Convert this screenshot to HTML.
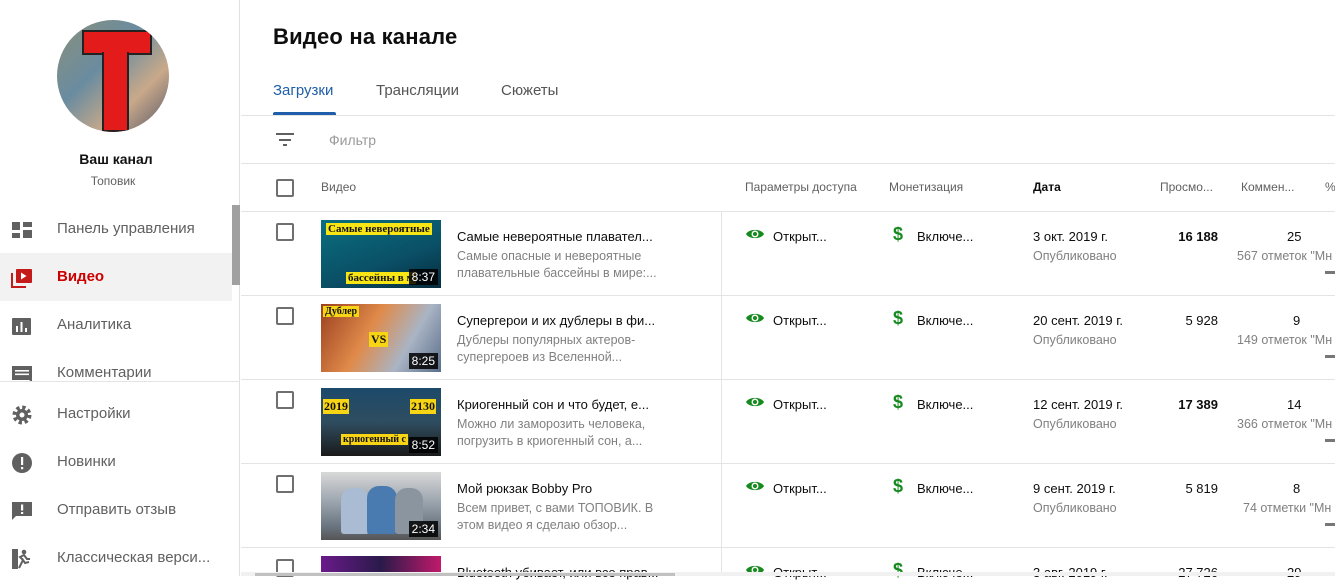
<!DOCTYPE html>
<html><head><meta charset="utf-8"><style>
*{margin:0;padding:0;box-sizing:border-box}
body{width:1335px;height:576px;overflow:hidden;background:#fff;font-family:"Liberation Sans",Arial,sans-serif;position:relative;color:#0d0d0d}
.a{position:absolute;white-space:nowrap}
.side{position:absolute;left:0;top:0;width:240px;height:576px;border-right:1px solid #e0e0e0}
.nav{position:absolute;left:0;width:232px;height:48px;font-size:15px;color:#606060}
.nav span{position:absolute;left:57px;top:15px}
.nav svg{position:absolute;left:11px;top:14px}
.hl{position:absolute;height:1px;background:#e4e4e4}
.cb{position:absolute;left:276px;width:18px;height:18px;border:2px solid #6f6f6f;border-radius:2px}
.th{font-size:12px;color:#606060}
.t1{font-size:13px;color:#0d0d0d}
.t2{font-size:12.5px;color:#808080;line-height:17px}
.dur{position:absolute;right:3px;bottom:3px;background:rgba(0,0,0,.85);color:#fff;font-size:12px;padding:1px 3px}
</style></head><body>
<div class="side">
 <div class="a" style="left:57px;top:20px;width:112px;height:112px;border-radius:50%;overflow:hidden;background:linear-gradient(135deg,#8a8f7a,#6a8ca0 40%,#c9a98a 70%,#556)">
  <div style="position:absolute;left:25px;top:10px;width:70px;height:25px;background:#e31b1b;border:2px solid #222"></div>
  <div style="position:absolute;left:45px;top:32px;width:27px;height:80px;background:#e31b1b;border:2px solid #222;border-top:none"></div>
 </div>
 <div class="a" style="left:0;width:232px;text-align:center;top:151px;font-size:14px;font-weight:bold;color:#111">Ваш канал</div>
 <div class="a" style="left:0;width:226px;text-align:center;top:174px;font-size:12px;color:#606060">Топовик</div>
 <div class="nav" style="top:205px"><svg width="22" height="22"><rect x="1" y="3" width="8" height="8" fill="#606060"/><rect x="12" y="3" width="9" height="5" fill="#606060"/><rect x="1" y="14" width="8" height="5" fill="#606060"/><rect x="12" y="11" width="9" height="8" fill="#606060"/></svg><span>Панель управления</span></div>
 <div class="nav" style="top:253px;background:#f2f2f2;color:#c00;font-weight:bold"><svg width="22" height="22"><path d="M1 6v14h14" stroke="#c41a1a" stroke-width="2" fill="none"/><rect x="5" y="2" width="16" height="14" rx="1" fill="#c41a1a"/><path d="M10 5.5v7l5.5-3.5z" fill="#fff"/></svg><span>Видео</span></div>
 <div class="nav" style="top:301px"><svg width="22" height="22"><rect x="1" y="3" width="19" height="17" rx="1" fill="#606060"/><rect x="5" y="11" width="2" height="6" fill="#fff"/><rect x="9.5" y="7" width="2" height="10" fill="#fff"/><rect x="14" y="13" width="2" height="4" fill="#fff"/></svg><span>Аналитика</span></div>
 <div class="nav" style="top:349px"><svg width="22" height="22"><path d="M1 3h20v16l-3-2H1z" fill="#606060"/><rect x="4" y="7" width="14" height="1.6" fill="#fff"/><rect x="4" y="10.5" width="14" height="1.6" fill="#fff"/></svg><span>Комментарии</span></div>
 <div class="hl" style="left:0;top:381px;width:240px"></div>
 <div class="nav" style="top:390px"><svg width="22" height="22"><circle cx="11" cy="11" r="7" fill="none" stroke="#606060" stroke-width="5" stroke-dasharray="3 2.5"/><circle cx="11" cy="11" r="6" fill="#606060"/><circle cx="11" cy="11" r="2.5" fill="#fff"/></svg><span>Настройки</span></div>
 <div class="nav" style="top:438px"><svg width="22" height="22"><circle cx="11" cy="11" r="10" fill="#606060"/><rect x="10" y="5" width="2.2" height="8" fill="#fff"/><rect x="10" y="15" width="2.2" height="2.2" fill="#fff"/></svg><span>Новинки</span></div>
 <div class="nav" style="top:486px"><svg width="22" height="22"><path d="M1 2h20v14H5l-4 4z" fill="#606060"/><rect x="10" y="4.5" width="2.2" height="6" fill="#fff"/><rect x="10" y="12" width="2.2" height="2" fill="#fff"/></svg><span>Отправить отзыв</span></div>
 <div class="nav" style="top:534px"><svg width="22" height="22"><rect x="1" y="1" width="6" height="20" fill="#606060"/><circle cx="13" cy="4" r="2.3" fill="#606060"/><path d="M8 20l4-8 2 3 4-1M12 12l-3-3 4-2 3 4 3 0" stroke="#606060" stroke-width="2" fill="none"/></svg><span>Классическая верси...</span></div>
 <div class="a" style="left:232px;top:205px;width:8px;height:80px;background:#a0a0a0"></div>
</div>

<div class="a" style="left:273px;top:24px;font-size:22px;font-weight:bold;color:#0d0d0d;letter-spacing:.2px">Видео на канале</div>
<div class="a" style="left:273px;top:82px;font-size:15px;color:#1f5eaa">Загрузки</div>
<div class="a" style="left:376px;top:82px;font-size:15px;color:#555">Трансляции</div>
<div class="a" style="left:501px;top:82px;font-size:15px;color:#555">Сюжеты</div>
<div class="a" style="left:273px;top:112px;width:63px;height:3px;background:#1f5eaa;border-radius:2px 2px 0 0"></div>
<div class="hl" style="left:241px;top:115px;width:1094px"></div>
<svg class="a" style="left:275px;top:131px" width="20" height="16"><rect x="1" y="2" width="18" height="2" fill="#606060"/><rect x="4" y="8" width="12" height="2" fill="#606060"/><rect x="8" y="13" width="4" height="2" fill="#606060"/></svg>
<div class="a" style="left:329px;top:132px;font-size:14px;color:#9a9a9a">Фильтр</div>
<div class="hl" style="left:241px;top:163px;width:1094px"></div>

<div class="cb" style="top:179px"></div>
<div class="a th" style="left:321px;top:180px">Видео</div>
<div class="a th" style="left:745px;top:180px">Параметры доступа</div>
<div class="a th" style="left:889px;top:180px">Монетизация</div>
<div class="a th" style="left:1033px;top:180px;color:#0d0d0d;font-weight:bold">Дата</div>
<div class="a th" style="left:1160px;top:180px">Просмо...</div>
<div class="a th" style="left:1241px;top:180px">Коммен...</div>
<div class="a th" style="left:1325px;top:180px">%</div>
<div class="hl" style="left:241px;top:211px;width:1094px"></div>
<div class="a" style="left:721px;top:212px;width:1px;height:364px;background:#e4e4e4"></div>

<!-- rows -->
<div id="rows"></div>
<div class="cb" style="top:223px"></div>
<div class="a" style="left:321px;top:220px;width:120px;height:68px;background:linear-gradient(160deg,#0a6f7f,#0a4f66 60%,#062c3d)"><div class="a" style="left:5px;top:3px;background:#f7e514;font:bold 11px 'Liberation Serif',serif;color:#111;padding:0 2px">Самые невероятные</div><div class="a" style="left:25px;top:52px;background:#f7e514;font:bold 11px 'Liberation Serif',serif;color:#111;padding:0 2px">бассейны в м</div><div class="dur">8:37</div></div>
<div class="a t1" style="left:457px;top:229px">Самые невероятные плавател...</div>
<div class="a t2" style="left:457px;top:248px">Самые опасные и невероятные<br>плавательные бассейны в мире:...</div>
<div class="hl" style="left:241px;top:295px;width:1094px"></div>

<div class="cb" style="top:307px"></div>
<div class="a" style="left:321px;top:304px;width:120px;height:68px;background:linear-gradient(120deg,#9a4020,#e08a4a 40%,#a9b4c4 70%,#5a6d8a)"><div class="a" style="left:2px;top:2px;background:#f7d514;font:bold 10px 'Liberation Serif',serif;color:#111;padding:0 2px">Дублер</div><div class="a" style="left:48px;top:28px;background:#f7d514;font:bold 12px 'Liberation Serif',serif;color:#111;padding:0 2px">VS</div><div class="dur">8:25</div></div>
<div class="a t1" style="left:457px;top:313px">Супергерои и их дублеры в фи...</div>
<div class="a t2" style="left:457px;top:332px">Дублеры популярных актеров-<br>супергероев из Вселенной...</div>
<div class="hl" style="left:241px;top:379px;width:1094px"></div>

<div class="cb" style="top:391px"></div>
<div class="a" style="left:321px;top:388px;width:120px;height:68px;background:linear-gradient(180deg,#1c4a6a,#2f4d60 50%,#1a1a1a)"><div class="a" style="left:2px;top:11px;background:#f7d514;font:bold 12px 'Liberation Serif',serif;color:#111;padding:0 1px">2019</div><div class="a" style="left:89px;top:11px;background:#f7d514;font:bold 12px 'Liberation Serif',serif;color:#111;padding:0 1px">2130</div><div class="a" style="left:20px;top:46px;background:#f7d514;font:bold 10px 'Liberation Serif',serif;color:#111;padding:0 2px">криогенный с</div><div class="dur">8:52</div></div>
<div class="a t1" style="left:457px;top:397px">Криогенный сон и что будет, е...</div>
<div class="a t2" style="left:457px;top:416px">Можно ли заморозить человека,<br>погрузить в криогенный сон, а...</div>
<div class="hl" style="left:241px;top:463px;width:1094px"></div>

<div class="cb" style="top:475px"></div>
<div class="a" style="left:321px;top:472px;width:120px;height:68px;background:linear-gradient(180deg,#d8d8d8,#9aa3ad 45%,#6a7480 80%,#555)"><div class="a" style="left:20px;top:16px;width:28px;height:46px;background:#a9bcd4;border-radius:12px 12px 3px 3px"></div><div class="a" style="left:46px;top:14px;width:30px;height:48px;background:#4a7bb0;border-radius:12px 12px 3px 3px"></div><div class="a" style="left:74px;top:16px;width:28px;height:46px;background:#8a95a0;border-radius:12px 12px 3px 3px"></div><div class="dur">2:34</div></div>
<div class="a t1" style="left:457px;top:481px">Мой рюкзак Bobby Pro</div>
<div class="a t2" style="left:457px;top:500px">Всем привет, с вами ТОПОВИК. В<br>этом видео я сделаю обзор...</div>
<div class="hl" style="left:241px;top:547px;width:1094px"></div>

<div class="cb" style="top:559px"></div>
<div class="a" style="left:321px;top:556px;width:120px;height:20px;background:linear-gradient(90deg,#6a1a8a,#2a1a4a 50%,#c01a6a)"></div>
<div class="a t1" style="left:457px;top:565px">Bluetooth убивает, или все прав...</div>

<!-- right columns -->
<svg class="a" style="left:745px;top:227px" width="20" height="14"><path d="M1 7C4 1.5 16 1.5 19 7C16 12.5 4 12.5 1 7z" fill="#178a1f"/><circle cx="10" cy="7" r="3.5" fill="#fff"/><circle cx="10" cy="7" r="2" fill="#178a1f"/></svg>
<svg class="a" style="left:745px;top:311px" width="20" height="14"><path d="M1 7C4 1.5 16 1.5 19 7C16 12.5 4 12.5 1 7z" fill="#178a1f"/><circle cx="10" cy="7" r="3.5" fill="#fff"/><circle cx="10" cy="7" r="2" fill="#178a1f"/></svg>
<svg class="a" style="left:745px;top:395px" width="20" height="14"><path d="M1 7C4 1.5 16 1.5 19 7C16 12.5 4 12.5 1 7z" fill="#178a1f"/><circle cx="10" cy="7" r="3.5" fill="#fff"/><circle cx="10" cy="7" r="2" fill="#178a1f"/></svg>
<svg class="a" style="left:745px;top:479px" width="20" height="14"><path d="M1 7C4 1.5 16 1.5 19 7C16 12.5 4 12.5 1 7z" fill="#178a1f"/><circle cx="10" cy="7" r="3.5" fill="#fff"/><circle cx="10" cy="7" r="2" fill="#178a1f"/></svg>
<svg class="a" style="left:745px;top:563px" width="20" height="14"><path d="M1 7C4 1.5 16 1.5 19 7C16 12.5 4 12.5 1 7z" fill="#178a1f"/><circle cx="10" cy="7" r="3.5" fill="#fff"/><circle cx="10" cy="7" r="2" fill="#178a1f"/></svg>
<div class="a t1" style="left:773px;top:229px">Открыт...</div>
<div class="a t1" style="left:773px;top:313px">Открыт...</div>
<div class="a t1" style="left:773px;top:397px">Открыт...</div>
<div class="a t1" style="left:773px;top:481px">Открыт...</div>
<div class="a t1" style="left:773px;top:565px">Открыт...</div>
<div class="a" style="left:893px;top:224px;font-size:18px;font-weight:bold;color:#178a1f">$</div>
<div class="a" style="left:893px;top:308px;font-size:18px;font-weight:bold;color:#178a1f">$</div>
<div class="a" style="left:893px;top:392px;font-size:18px;font-weight:bold;color:#178a1f">$</div>
<div class="a" style="left:893px;top:476px;font-size:18px;font-weight:bold;color:#178a1f">$</div>
<div class="a" style="left:893px;top:560px;font-size:18px;font-weight:bold;color:#178a1f">$</div>
<div class="a t1" style="left:917px;top:229px">Включе...</div>
<div class="a t1" style="left:917px;top:313px">Включе...</div>
<div class="a t1" style="left:917px;top:397px">Включе...</div>
<div class="a t1" style="left:917px;top:481px">Включе...</div>
<div class="a t1" style="left:917px;top:565px">Включе...</div>

<div class="a t1" style="left:1033px;top:229px">3 окт. 2019 г.</div>
<div class="a t2" style="left:1033px;top:248px">Опубликовано</div>
<div class="a t1" style="left:1033px;top:313px">20 сент. 2019 г.</div>
<div class="a t2" style="left:1033px;top:332px">Опубликовано</div>
<div class="a t1" style="left:1033px;top:397px">12 сент. 2019 г.</div>
<div class="a t2" style="left:1033px;top:416px">Опубликовано</div>
<div class="a t1" style="left:1033px;top:481px">9 сент. 2019 г.</div>
<div class="a t2" style="left:1033px;top:500px">Опубликовано</div>
<div class="a t1" style="left:1033px;top:565px">3 авг. 2019 г.</div>

<div class="a t1" style="right:117px;top:229px;font-weight:bold">16 188</div>
<div class="a t1" style="right:117px;top:313px">5 928</div>
<div class="a t1" style="right:117px;top:397px;font-weight:bold">17 389</div>
<div class="a t1" style="right:117px;top:481px">5 819</div>
<div class="a t1" style="right:117px;top:565px">27 726</div>

<div class="a t1" style="left:1287px;top:229px">25</div>
<div class="a t2" style="left:1237px;top:248px">567 отметок "Мн</div>
<div class="a t1" style="left:1293px;top:313px">9</div>
<div class="a t2" style="left:1237px;top:332px">149 отметок "Мн</div>
<div class="a t1" style="left:1287px;top:397px">14</div>
<div class="a t2" style="left:1237px;top:416px">366 отметок "Мн</div>
<div class="a t1" style="left:1293px;top:481px">8</div>
<div class="a t2" style="left:1243px;top:500px">74 отметки "Мн</div>
<div class="a t1" style="left:1287px;top:565px">29</div>
<div class="a" style="left:1325px;top:271px;width:10px;height:3px;background:#777"></div>
<div class="a" style="left:1325px;top:355px;width:10px;height:3px;background:#777"></div>
<div class="a" style="left:1325px;top:439px;width:10px;height:3px;background:#777"></div>
<div class="a" style="left:1325px;top:523px;width:10px;height:3px;background:#777"></div>
<div class="a" style="left:241px;top:572px;width:1094px;height:4px;background:#f1f1f1"></div>
<div class="a" style="left:255px;top:573px;width:420px;height:3px;background:#c1c1c1"></div>
</body></html>
